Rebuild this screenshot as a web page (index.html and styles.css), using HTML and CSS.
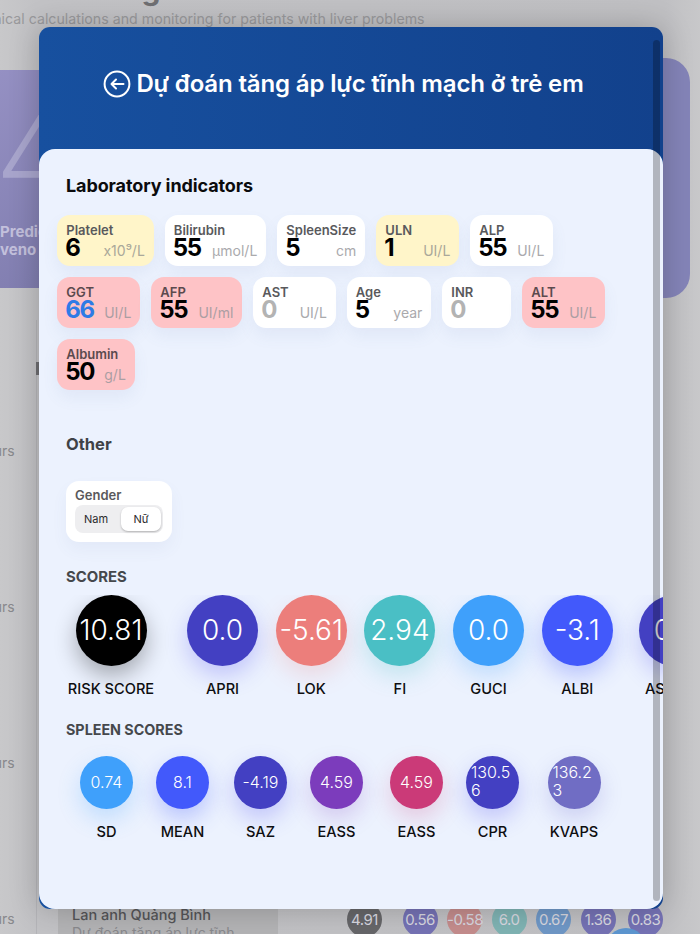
FILE: index.html
```html
<!DOCTYPE html>
<html lang="vi">
<head>
<meta charset="utf-8">
<title>Dự đoán tăng áp lực tĩnh mạch ở trẻ em</title>
<link rel="stylesheet" href="styles.css">
</head>
<body>
<div class="backdrop">
  <div class="bg-heading">Monitoring</div>
  <p class="bg-sub">Clinical calculations and monitoring for patients with liver problems</p>
  <div class="bg-card bg-card-left">
    <span class="bg-four">4</span>
    <span class="bg-card-text">Predict<br>veno</span>
  </div>
  <div class="bg-card bg-card-right"></div>
  <div class="bg-divider"></div>
  <div class="bg-tick"></div>
  <span class="bg-hours h1">hours</span>
  <span class="bg-hours h2">hours</span>
  <span class="bg-hours h3">hours</span>
  <span class="bg-hours h4">hours</span>
  <div class="bg-row">
    <div class="bg-row-text">
      <b>Lan anh Quảng Bình</b>
      <span>Dự đoán tăng áp lực tĩnh</span>
    </div>
    <div class="bg-dots">
      <i class="d-gray first">4.91</i><i class="d-purple">0.56</i><i class="d-red">-0.58</i><i class="d-teal">6.0</i><i class="d-blue">0.67</i><i class="d-purple">1.36</i><i class="d-purple last">0.83</i>
    </div>
  </div>
  <div class="bg-fab"></div>
</div>

<main class="modal">
  <header class="modal-head">
    <svg class="back" viewBox="0 0 28 28" width="28" height="28" fill="none" stroke="#fff" stroke-width="2" stroke-linecap="round" stroke-linejoin="round" aria-hidden="true">
      <circle cx="14" cy="14" r="12.4"/>
      <path d="M20.5 14H8.5M13 9.5 8.5 14l4.5 4.5"/>
    </svg>
    <h1>Dự đoán tăng áp lực tĩnh mạch ở trẻ em</h1>
  </header>
  <div class="sheet">
    <h2 class="lab-title">Laboratory indicators</h2>
    <div class="chips">
      <div class="chip yellow w-plt"><span class="k">Platelet</span><div class="vr"><b>6</b><em>x10⁹/L</em></div></div>
      <div class="chip w-bil"><span class="k">Bilirubin</span><div class="vr"><b>55</b><em>µmol/L</em></div></div>
      <div class="chip w-spl"><span class="k">SpleenSize</span><div class="vr"><b>5</b><em>cm</em></div></div>
      <div class="chip yellow w83"><span class="k">ULN</span><div class="vr"><b>1</b><em>UI/L</em></div></div>
      <div class="chip w83"><span class="k">ALP</span><div class="vr"><b>55</b><em>UI/L</em></div></div>
      <div class="chip pink w83"><span class="k">GGT</span><div class="vr"><b class="blue">66</b><em>UI/L</em></div></div>
      <div class="chip pink w91"><span class="k">AFP</span><div class="vr"><b>55</b><em>UI/ml</em></div></div>
      <div class="chip w-ast"><span class="k">AST</span><div class="vr"><b class="muted">0</b><em>UI/L</em></div></div>
      <div class="chip w85"><span class="k">Age</span><div class="vr"><b>5</b><em>year</em></div></div>
      <div class="chip w69"><span class="k">INR</span><div class="vr"><b class="muted">0</b></div></div>
      <div class="chip pink w83"><span class="k">ALT</span><div class="vr"><b>55</b><em>UI/L</em></div></div>
      <div class="chip pink w77"><span class="k">Albumin</span><div class="vr"><b>50</b><em>g/L</em></div></div>
    </div>

    <h2 class="other-title">Other</h2>
    <div class="gender">
      <span class="k">Gender</span>
      <div class="seg"><span class="seg-a">Nam</span><span class="seg-b">Nữ</span></div>
    </div>

    <h3 class="scores-title">SCORES</h3>
    <div class="scores">
      <div class="score s-risk"><div class="ball black">10.81</div><span>RISK SCORE</span></div>
      <div class="score s-apri"><div class="ball indigo">0.0</div><span>APRI</span></div>
      <div class="score s-n"><div class="ball salmon">-5.61</div><span>LOK</span></div>
      <div class="score s-n"><div class="ball teal">2.94</div><span>FI</span></div>
      <div class="score s-n"><div class="ball sky">0.0</div><span>GUCI</span></div>
      <div class="score s-n"><div class="ball royal">-3.1</div><span>ALBI</span></div>
      <div class="score s-as"><div class="ball indigo">0.0</div><span>ASPRI</span></div>
    </div>

    <h3 class="spleen-title">SPLEEN SCORES</h3>
    <div class="spleen">
      <div class="sp sp-sd"><div class="mini sky">0.74</div><span>SD</span></div>
      <div class="sp sp-mean"><div class="mini royal">8.1</div><span>MEAN</span></div>
      <div class="sp sp-saz"><div class="mini indigo">-4.19</div><span>SAZ</span></div>
      <div class="sp sp-eass"><div class="mini violet">4.59</div><span>EASS</span></div>
      <div class="sp sp-eass2"><div class="mini rose">4.59</div><span>EASS</span></div>
      <div class="sp sp-cpr"><div class="mini indigo wrap">130.56</div><span>CPR</span></div>
      <div class="sp sp-kv"><div class="mini slate wrap">136.23</div><span>KVAPS</span></div>
    </div>
  </div>
  <div class="scrollbar"></div>
</main>
</body>
</html>
```
FILE: styles.css
```css
* { box-sizing: border-box; }
html, body { margin: 0; padding: 0; }
body {
  width: 700px;
  height: 934px;
  overflow: hidden;
  position: relative;
  background: #c3c3c6;
  font-family: Inter, "Liberation Sans", sans-serif;
}

/* dimmed page behind the dialog */
.backdrop { position: absolute; inset: 0; overflow: hidden; background: linear-gradient(90deg, #c8c8ca 0%, #c2c2c5 5%, #c0c0c3 95%, #c8c8ca 100%); }
.bg-heading { position: absolute; left: 0; top: -29px; font-size: 30px; font-weight: 700; color: #6f6f72; }
.bg-sub { position: absolute; left: -24px; top: 10px; margin: 0; font-size: 14.2px; line-height: 17px; color: #99999c; white-space: nowrap; }
.bg-card { position: absolute; top: 70px; height: 218px; background: linear-gradient(135deg, #9893c6, #7f7cae); }
.bg-card-left { left: -40px; width: 90px; top: 70px; }
.bg-card-right { left: 600px; width: 90px; top: 58px; height: 240px; border-radius: 24px; background: #8484b8; }
.bg-four { position: absolute; left: 36px; top: 30px; font-size: 110px; font-weight: 300; line-height: 110px; color: #a8a5cc; }
.bg-card-text { position: absolute; left: 40px; top: 153px; font-size: 15px; line-height: 18px; font-weight: 700; color: #c3c0dc; white-space: nowrap; }
.bg-divider { position: absolute; left: 36px; top: 320px; width: 1px; height: 614px; background: #b4b4b8; }
.bg-tick { position: absolute; left: 36px; top: 362px; width: 3px; height: 13px; background: #6d6d70; }
.bg-hours { position: absolute; left: -23px; font-size: 14px; line-height: 17px; color: #88888c; }
.h1 { top: 442px; } .h2 { top: 598px; } .h3 { top: 754px; } .h4 { top: 910px; }
.bg-row { position: absolute; left: 58px; top: 905px; width: 642px; height: 29px; display: flex; }
.bg-row-text { width: 220px; background: #b3b3b5; padding: 1px 14px; display: flex; flex-direction: column; }
.bg-row-text b { font-size: 14.5px; line-height: 18px; font-weight: 500; color: #555558; white-space: nowrap; }
.bg-row-text span { font-size: 14px; line-height: 17px; color: #88888c; white-space: nowrap; }
.bg-dots { display: flex; gap: 9.5px; margin-left: 69px; }
.bg-dots i { width: 35px; height: 35px; margin-top: -3px; flex: none; border-radius: 50%; font-style: normal; font-size: 15px; line-height: 35px; text-align: center; color: #d8d8e0; letter-spacing: -.5px; }
.bg-dots .first { margin-right: 11px; }
.bg-dots .last { margin-left: 3px; }
.d-gray { background: #666669; } .d-purple { background: #7572b4; } .d-red { background: #c48c8c; } .d-teal { background: #7fb3b3; } .d-blue { background: #6f97c6; }
.bg-fab { position: absolute; left: 606px; top: 928px; width: 40px; height: 40px; border-radius: 50%; background: #5d96d0; }

/* dialog */
.modal {
  position: absolute;
  left: 39px;
  top: 27px;
  width: 624px;
  height: 882px;
  border-radius: 11px;
  background: linear-gradient(90deg, #17509f, #12418c);
  box-shadow: 0 0 30px rgba(0,0,0,.22);
  overflow: hidden;
}
.modal-head { height: 122px; padding: 0 15px 8px 0; display: flex; align-items: center; justify-content: center; gap: 5px; }
.back { flex: none; }
.modal-head h1 { margin: 0; font-size: 24px; line-height: 30px; font-weight: 600; color: #fff; white-space: nowrap; letter-spacing: -.15px; }
.sheet {
  position: relative;
  height: 760px;
  border-radius: 16px;
  background: #ecf2fe;
  padding: 26px 27px 0;
  overflow: hidden;
}
.scrollbar {
  position: absolute;
  right: 3px;
  top: 13px;
  bottom: 8px;
  width: 7px;
  border-radius: 4px;
  background: rgba(0,0,0,.25);
}

h2, h3 { margin: 0; }
.lab-title { font-size: 18px; line-height: 22px; font-weight: 700; color: #0b0b0d; letter-spacing: -.1px; }
.chips { display: flex; flex-wrap: wrap; gap: 11px; width: 560px; margin: 18px 0 0 -8.7px; }
.chip {
  height: 51px;
  padding: 8px 9px 0;
  border-radius: 13px;
  background: #fff;
  box-shadow: 0 8px 16px rgba(90,110,160,.08);
}
.chip.yellow { background: #fff5c9; }
.chip.pink { background: #fec3c6; }
.w-plt { width: 96.5px; } .w-bil { width: 101.5px; } .w-spl { width: 88px; } .w83 { width: 83px; }
.w91 { width: 91px; } .w-ast { width: 82.5px; } .w85 { width: 84.5px; } .w69 { width: 69px; } .w77 { width: 77.5px; }
.k { display: block; font-size: 13px; line-height: 15px; font-weight: 600; color: #59595c; white-space: nowrap; }
.vr { display: flex; justify-content: space-between; align-items: baseline; margin-top: -3px; }
.vr b { margin-left: -1px; font-size: 24px; line-height: 25px; font-weight: 700; color: #000; letter-spacing: -1.4px; }
.vr b.blue { color: #2e7be6; }
.vr b.muted { color: #b3b3b3; }
.vr em { font-style: normal; font-size: 14px; line-height: 17px; color: #aaaaad; white-space: nowrap; }
.pink .vr em { color: #ab9ea3; }
.yellow .vr em { color: #aaa89a; }
.pink .k { color: #5b4a4e; }

.other-title { margin-top: 43px; font-size: 16.5px; line-height: 22px; font-weight: 700; color: #3f4246; }
.gender {
  width: 106px;
  height: 61px;
  margin-top: 26px;
  padding: 7px 9px;
  border-radius: 13px;
  background: #fff;
  box-shadow: 0 8px 16px rgba(90,110,160,.06);
}
.seg { display: flex; height: 28px; margin-top: 2px; border-radius: 8px; background: #eeeef0; padding: 2px 2px 2px 0; }
.seg span { display: flex; align-items: center; justify-content: center; font-size: 11px; font-weight: 400; color: #2a2a2d; }
.seg-a { width: 46px; padding-right: 4px; }
.seg-b { flex: 1; background: #fff; border-radius: 7px; box-shadow: 0 1px 2px rgba(0,0,0,.25); }

.scores-title { margin-top: 26px; font-size: 14.9px; line-height: 18px; font-weight: 700; color: #45484c; }
.scores { display: flex; margin: 9px -27px 0; width: 624px; overflow: hidden; height: 120px; padding-bottom: 6px; }
.score { flex: none; display: flex; flex-direction: column; align-items: center; }
.score span { margin-top: 14px; font-size: 14.6px; line-height: 18px; font-weight: 500; color: #0e0e10; white-space: nowrap; }
.ball {
  width: 71px;
  height: 71px;
  flex: none;
  border-radius: 50%;
  text-align: center;
  font-size: 28px;
  line-height: 71px;
  font-weight: 300;
  color: #fff;
  overflow: hidden;
  white-space: nowrap;
}
.s-risk { width: 100px; margin-left: 22px; }
.s-apri { width: 71px; margin-left: 26px; }
.s-n { width: 71px; margin-left: 17.7px; }
.s-as { width: 71px; margin-left: 26px; }
.s-as span { margin-right: 16px; }

.black  { background: #000; box-shadow: 0 10px 22px rgba(0,0,0,.3); }
.indigo { background: #4340c2; box-shadow: 0 10px 22px rgba(67,64,240,.25); }
.salmon { background: #ec7e7b; box-shadow: 0 10px 22px rgba(236,126,123,.22); }
.teal   { background: #4abfc5; box-shadow: 0 10px 22px rgba(74,191,197,.25); }
.sky    { background: #3fa0fb; box-shadow: 0 10px 22px rgba(63,160,251,.25); }
.royal  { background: #4259fb; box-shadow: 0 10px 22px rgba(66,89,251,.3); }
.violet { background: #7c3cbc; box-shadow: 0 10px 22px rgba(124,60,188,.22); }
.rose   { background: #cb3a78; box-shadow: 0 10px 22px rgba(203,58,120,.22); }
.slate  { background: #706dc4; box-shadow: 0 10px 22px rgba(90,88,200,.22); }

.spleen-title { margin-top: 6px; font-size: 14.3px; line-height: 18px; font-weight: 700; color: #45484c; }
.spleen { display: flex; margin: 17px -27px 0; width: 624px; height: 92px; }
.sp { flex: none; width: 53px; display: flex; flex-direction: column; align-items: center; }
.sp span { margin-top: 14px; font-size: 14.6px; line-height: 18px; font-weight: 500; color: #0e0e10; white-space: nowrap; }
.mini {
  width: 53px;
  height: 53px;
  flex: none;
  border-radius: 50%;
  font-size: 16px;
  line-height: 53px;
  font-weight: 300;
  text-align: center;
  color: #fff;
}
.mini.wrap { line-height: 18px; padding: 7px 0 0 5px; text-align: left; word-break: break-all; }
.sp-sd { margin-left: 41px; }
.sp-mean { margin-left: 23px; }
.sp-saz { margin-left: 25px; }
.sp-eass { margin-left: 23px; }
.sp-eass2 { margin-left: 27px; }
.sp-cpr { margin-left: 23px; }
.sp-kv { margin-left: 28.5px; }
```
